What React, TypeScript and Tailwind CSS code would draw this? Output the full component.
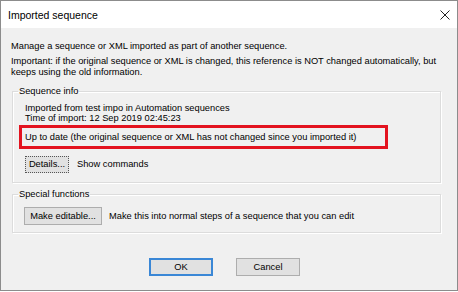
import React from "react";

const font = { fontFamily: '"Liberation Sans", Arial, sans-serif' };

export default function App() {
  return (
    <div className="w-[458px] h-[292px] bg-white" style={font}>
      <div className="w-[458px] h-[291px] border border-[#8c8c8c] bg-[#f0f0f0] flex flex-col text-black">
        <div className="h-[27px] bg-white flex items-center justify-between pl-[7px] pr-[7px] shrink-0">
          <span className="text-[10.5px] leading-[12px]">Imported sequence</span>
          <svg width="10" height="10" viewBox="0 0 10 10" className="mt-[1px]">
            <path d="M0.5 0.5 L9.5 9.5 M9.5 0.5 L0.5 9.5" stroke="#222" strokeWidth="1" fill="none" />
          </svg>
        </div>
        <div className="flex flex-col pl-[10px] pt-[13px] text-[9.3px] leading-[11px]">
          <div>Manage a sequence or XML imported as part of another sequence.</div>
          <div className="mt-[4px]">
            Important: if the original sequence or XML is changed, this reference is NOT changed automatically, but
          </div>
          <div>keeps using the old information.</div>

          <fieldset className="mt-[8px] ml-[1px] w-[429px] border border-[#dcdcdc] shadow-[inset_1px_1px_0_#ffffff,1px_1px_0_#ffffff] pl-[5px] pb-[9px]">
            <legend className="px-[1px] leading-[11px]">Sequence info</legend>
            <div className="ml-[7px] mt-[6px] leading-[10px]">Imported from test impo in Automation sequences</div>
            <div className="ml-[7px] leading-[10px]">Time of import: 12 Sep 2019 02:45:23</div>
            <div className="ml-[1px] mt-[2px] w-[369px] h-[24px] border-[3px] border-[#e3131f] pl-[3px] flex items-center">
              <span className="leading-[11px]">Up to date (the original sequence or XML has not changed since you imported it)</span>
            </div>
            <div className="ml-[7px] mt-[7px] flex items-center">
              <div className="w-[44px] h-[17px] border border-dotted border-[#555555] bg-[#e1e1e1] flex items-center justify-center">
                Details...
              </div>
              <span className="ml-[8px]">Show commands</span>
            </div>
          </fieldset>

          <fieldset className="mt-[6px] ml-[1px] w-[429px] border border-[#dcdcdc] shadow-[inset_1px_1px_0_#ffffff,1px_1px_0_#ffffff] pl-[5px] pb-[7px]">
            <legend className="px-[1px] leading-[11px]">Special functions</legend>
            <div className="ml-[6px] mt-[7px] flex items-center">
              <div className="w-[78px] h-[18px] border border-[#adadad] bg-[#e1e1e1] flex items-center justify-center">
                Make editable...
              </div>
              <span className="ml-[7px]">Make this into normal steps of a sequence that you can edit</span>
            </div>
          </fieldset>
        </div>
        <div className="flex mt-[25px] pl-[148px] gap-[23px] text-[9.3px] leading-[11px]">
          <div className="w-[64px] h-[18px] border-2 border-[#3a87d6] bg-[#e1e1e1] flex items-center justify-center">OK</div>
          <div className="w-[64px] h-[18px] border border-[#adadad] bg-[#e1e1e1] flex items-center justify-center">Cancel</div>
        </div>
      </div>
    </div>
  );
}
